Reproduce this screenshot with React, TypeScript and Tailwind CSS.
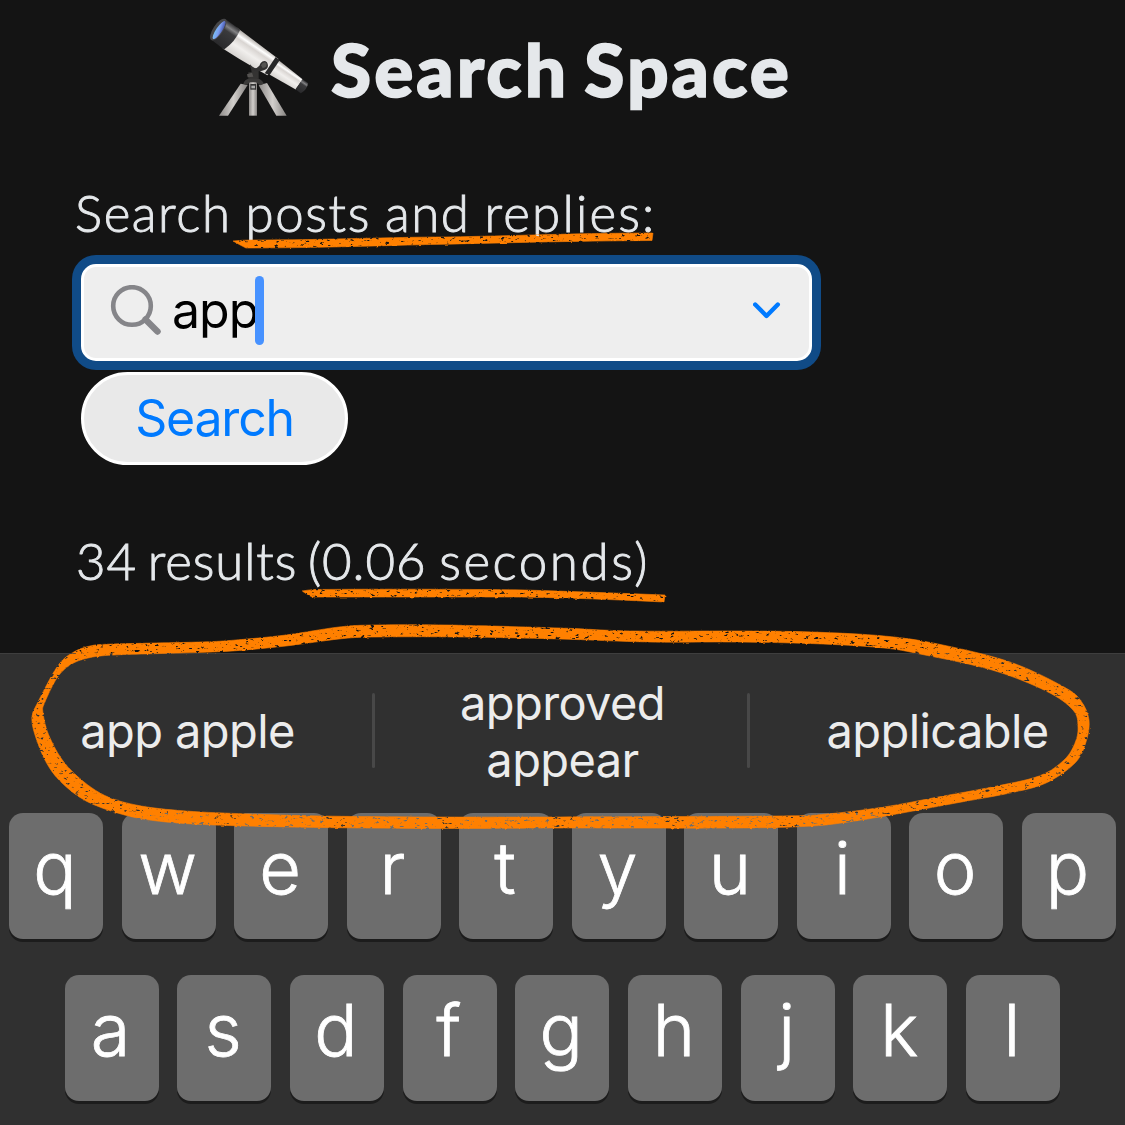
import React from "react";

type Point = [number, number];

/** Closed Catmull-Rom spline through the given points. */
function loop(points: Point[]): string {
  const n = points.length;
  let d = `M${points[0][0]} ${points[0][1]}`;
  for (let i = 0; i < n; i++) {
    const p0 = points[(i + n - 1) % n];
    const p1 = points[i];
    const p2 = points[(i + 1) % n];
    const p3 = points[(i + 2) % n];
    d += `C${p1[0] + (p2[0] - p0[0]) / 6} ${p1[1] + (p2[1] - p0[1]) / 6} ${p2[0] - (p3[0] - p1[0]) / 6} ${p2[1] - (p3[1] - p1[1]) / 6} ${p2[0]} ${p2[1]}`;
  }
  return d + "Z";
}

const outerEdge: Point[] = [
  [114, 644], [200, 642], [236, 640], [286, 635], [339, 627], [375, 625], [446, 625], [560, 628],
  [632, 631], [740, 631], [812, 632], [884, 636], [938, 644], [1010, 662], [1064, 687], [1081, 701],
  [1089, 720], [1086, 742], [1075, 763], [1046, 783], [1010, 793], [956, 803], [891, 815], [848, 822],
  [812, 826], [740, 828], [560, 828], [446, 828.5], [321, 827.5], [214, 825], [157, 821], [121, 814],
  [86, 801], [61, 782], [46, 762], [35, 735], [32, 717], [38, 702], [57, 667], [72, 653], [90, 646],
];

const innerEdge: Point[] = [
  [114, 655], [179, 653], [232, 651], [286, 646], [339, 639], [375, 637], [464, 637], [560, 639],
  [650, 642], [740, 642], [823, 644], [884, 648], [920, 654], [992, 670], [1046, 691], [1073, 710],
  [1078, 727], [1075, 743], [1064, 760], [1039, 776], [992, 787], [938, 797], [884, 807], [827, 814],
  [776, 816], [560, 817], [429, 817], [321, 816], [250, 814], [186, 811], [136, 805], [100, 793],
  [68, 767], [50, 738], [43, 713], [45, 702], [57, 678], [70, 665], [88, 658],
];

function Telescope() {
  return (
    <svg viewBox="0 0 360 360" className="h-[120px] w-[120px] shrink-0" aria-hidden="true">
      <defs>
        <linearGradient id="tube" x1="0" y1="0" x2="0" y2="1">
          <stop offset="0" stopColor="#aaa6a2" />
          <stop offset=".12" stopColor="#d8d5d2" />
          <stop offset=".22" stopColor="#ffffff" />
          <stop offset=".34" stopColor="#d9d5d2" />
          <stop offset=".6" stopColor="#f1efed" />
          <stop offset="1" stopColor="#d5d2cf" />
        </linearGradient>
        <linearGradient id="cap" x1="0" y1="0" x2="0" y2="1">
          <stop offset="0" stopColor="#29292b" />
          <stop offset=".2" stopColor="#838385" />
          <stop offset=".35" stopColor="#3a3a3c" />
          <stop offset="1" stopColor="#29292b" />
        </linearGradient>
        <linearGradient id="lens" x1="0" y1="1" x2="1" y2="0">
          <stop offset="0" stopColor="#78cdf5" />
          <stop offset=".5" stopColor="#7c9df0" />
          <stop offset="1" stopColor="#343b8c" />
        </linearGradient>
        <linearGradient id="leg" x1="0" y1="0" x2="1" y2="0">
          <stop offset="0" stopColor="#8d8a88" />
          <stop offset=".5" stopColor="#d2cfcc" />
          <stop offset="1" stopColor="#858280" />
        </linearGradient>
      </defs>
      <path d="M122 236 L143 240 L84 332 L57 332Z" fill="url(#leg)" />
      <path d="M176 241 L201 234 L260 332 L229 332Z" fill="url(#leg)" />
      <path d="M147 230 H171 V332 H147Z" fill="url(#leg)" />
      <path d="M130 237 Q132 224 151 219 L168 218 Q186 222 192 236 L180 241 L168 232 H150 L141 239Z" fill="#3a3938" />
      <path d="M151 237 H168 V254 H151Z" fill="#333" />
      <path d="M154 242 H165 V250 H154Z" fill="#aaa" />
      <path d="M151 175 H176 V221 H145 V202 H155Z" fill="#343332" />
      <path d="M141 208 L156 203 L160 215 L143 217Z" fill="#555351" />
      <path d="M110 82 L229 165 L206 203 L79 125Z" fill="url(#tube)" />
      <g transform="translate(54 73) rotate(34)">
        <path d="M44 -36 L60 -35 L200 -28 V31 Q115 39 44 40Z" fill="url(#tube)" />
        <path d="M190 -28 L205 -26 L205 27 L190 31Z" fill="#262627" />
        <path d="M205 -25 L294 -18 V19 L205 26Z" fill="url(#tube)" />
        <path d="M294 -18 H314 Q323 1 313 20 L293 19Z" fill="url(#cap)" />
        <path d="M0 -38 L56 -36 Q64 1 49 40 L0 37 Q-16 1 0 -38Z" fill="url(#cap)" />
        <ellipse cx="1" cy="0" rx="15" ry="38" fill="#464648" />
        <ellipse cx="4" cy="0" rx="9" ry="32" fill="url(#lens)" />
      </g>
      <path d="M151 178 L158 188 Q167 194 178 182 L182 174 Q192 163 201 172 Q210 189 191 196 Q177 202 158 196 Q148 190 151 178Z" fill="#323131" />
      <path d="M183 181 Q190 167 199 174 Q204 188 188 189Z" fill="#555452" />
    </svg>
  );
}

function Marks() {
  return (
    <svg
      viewBox="0 0 1125 1125"
      className="pointer-events-none absolute inset-0 h-[1125px] w-[1125px]"
      aria-hidden="true"
    >
      <defs>
        <filter id="crayon" filterUnits="userSpaceOnUse" x="0" y="200" width="1125" height="660" colorInterpolationFilters="sRGB">
          <feTurbulence type="fractalNoise" baseFrequency="0.2 0.4" numOctaves="3" seed="8" result="grain" />
          <feDisplacementMap in="SourceGraphic" in2="grain" scale="2.4" xChannelSelector="A" yChannelSelector="A" result="rough" />
          <feColorMatrix in="grain" type="matrix" values="0 0 0 0 0  0 0 0 0 0  0 0 0 0 0  0 0 0 -7 5.45" result="holes" />
          <feComposite in="rough" in2="holes" operator="in" />
        </filter>
      </defs>
      <g fill="#ff8000" stroke="#ff8000" strokeWidth="0.6" filter="url(#crayon)">
        <path d={loop(outerEdge) + loop(innerEdge)} fillRule="evenodd" />
        <path d="M233 241 Q243 240 252 240 C330 240 390 237 445 237 C510 236 580 233 653 233 L652 240.5 C570 241 500 243 430 244.5 C370 246 310 248 246 248 Q240 245 233 241Z" />
        <path d="M302 591 Q308 590 314 589.5 C380 589 450 589 525 590 Q590 592 665 595 L664 602 C600 599 550 597 500 597 C440 597 380 597 312 597 Q308 595 302 591Z" />
      </g>
    </svg>
  );
}

function Key({ label }: { label: string }) {
  return (
    <div className="h-[126px] w-[94px] rounded-[14px] bg-[#6d6d6d] pr-[2px] text-center text-[72px] leading-[110px] font-light text-white shadow-[0_3px_0_#1c1c1c] [-webkit-text-stroke:0.8px_white]">
      {label}
    </div>
  );
}

export default function App() {
  return (
    <div className="relative h-[1125px] w-[1125px] overflow-hidden bg-[#141414] font-['Inter',sans-serif]">
      <main className="flex h-[653px] flex-col items-start font-['Lato',sans-serif] text-[#e5e8eb]">
        <h1 className="mt-[5px] flex h-[120px] pl-[200px] text-[73px] leading-[129px] font-black whitespace-nowrap">
          <Telescope />
          <span className="ml-[11px] tracking-[3px] [word-spacing:-5px] [-webkit-text-stroke:1.6px_#e5e8eb]">Search Space</span>
        </h1>
        <label className="mt-[58px] ml-[75px] text-[51px] leading-[60px] font-light tracking-[1.6px] [word-spacing:-1.5px] whitespace-nowrap [-webkit-text-stroke:0.9px_#e5e8eb]">
          Search posts and <span className="tracking-[2.2px]">replies:</span>
        </label>
        <div className="mt-[21px] ml-[81px] flex h-[97px] w-[731px] items-center rounded-[15px] border-[3px] border-white bg-[#eeeeee] pr-[28px] pb-[4px] pl-[26px] shadow-[0_0_0_9px_#104b87]">
          <svg viewBox="0 0 52 52" className="h-[52px] w-[52px]" fill="none" stroke="#858589" aria-hidden="true">
            <circle cx="22" cy="21" r="18.8" strokeWidth="4.6" />
            <path d="M35.5 34.5 L47.5 46.5" strokeWidth="6.4" strokeLinecap="round" />
          </svg>
          <span className="ml-[10px] pb-[2px] font-['Inter',sans-serif] text-[50px] leading-[60px] tracking-[-1px] text-black">
            app
          </span>
          <span className="-ml-[3px] h-[69px] w-[9px] rounded-full bg-[#4792ff]" />
          <svg viewBox="0 0 28 18" className="ml-auto h-[18px] w-[28px]" fill="none" stroke="#007aff" strokeWidth="4.4" strokeLinecap="round" strokeLinejoin="round" aria-hidden="true">
            <path d="M2.2 2.5 L13.5 14 L24.8 2.5" />
          </svg>
        </div>
        <button className="mt-[11px] ml-[81px] h-[93px] w-[267px] rounded-full border-[3px] border-white bg-[#e9e9e9] pb-[2px] font-['Inter',sans-serif] text-[50px] leading-[84px] tracking-[-1.2px] text-[#007aff]">
          Search
        </button>
        <p className="mt-[66px] ml-[76px] text-[51px] leading-[60px] font-light tracking-[0.9px] [word-spacing:-4px] whitespace-nowrap [-webkit-text-stroke:0.9px_#e5e8eb]">
          34 results (0.06 <span className="ml-[2px] tracking-[2.6px]">seconds)</span>
        </p>
      </main>
      <section className="h-[472px] border-t border-[#3e3e3e] bg-[#303030]">
        <div className="flex h-[153px] items-center text-center text-[47px] leading-[57px] tracking-[-0.6px] text-[#ececec]">
          <div className="w-[372px] pl-[3px]">app apple</div>
          <div className="h-[75px] w-[3px] rounded-full bg-[#484848]" />
          <div className="w-[372px] pl-[3px]">
            approved
            <br />
            appear
          </div>
          <div className="h-[75px] w-[3px] rounded-full bg-[#484848]" />
          <div className="w-[375px]">applicable</div>
        </div>
        <div className="mt-[6px] flex gap-[18.5px] pl-[9px]">
          {[..."qwertyuiop"].map((k) => (
            <Key key={k} label={k} />
          ))}
        </div>
        <div className="mt-[36px] flex gap-[18.7px] pl-[64.5px]">
          {[..."asdfghjkl"].map((k) => (
            <Key key={k} label={k} />
          ))}
        </div>
      </section>
      <Marks />
    </div>
  );
}
